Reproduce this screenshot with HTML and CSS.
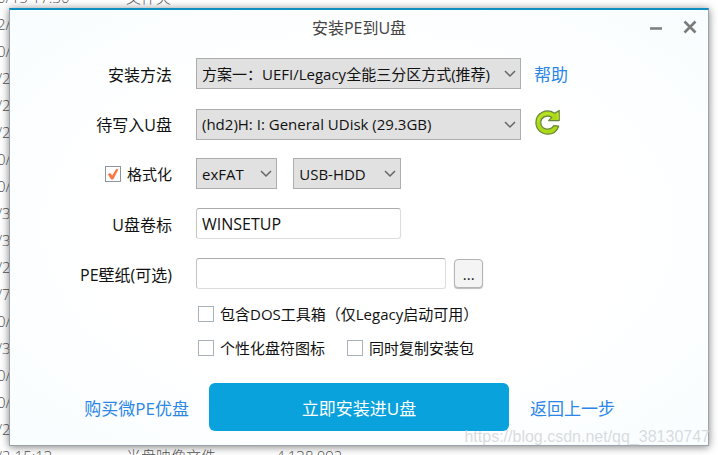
FILE: index.html
```html
<!doctype html>
<html lang="zh-CN">
<head>
    <meta charset="UTF-8">
    <meta name="viewport" content="width=device-width, initial-scale=1.0">
    <title>安装PE到U盘</title>
    <link rel="stylesheet" href="styles.css">
</head>
<body>
<div class="files">
    <div class="file"><span class="date">0/15 17:30</span><span class="type">文件夹</span></div>
    <div class="file">2/</div>
    <div class="file">0/</div>
    <div class="file">/2</div>
    <div class="file">/2</div>
    <div class="file">/2</div>
    <div class="file">0/</div>
    <div class="file">0/</div>
    <div class="file">/3</div>
    <div class="file">/3</div>
    <div class="file">/2</div>
    <div class="file">/7</div>
    <div class="file">0/</div>
    <div class="file">/3</div>
    <div class="file">0/</div>
    <div class="file">0/</div>
    <div class="file">/2</div>
    <div class="file"><span class="date">/2 15:13</span><span class="type">光盘映像文件</span><span>4,138,092</span></div>
</div>
<div class="dialog">
    <div class="titlebar">
        <h1 class="title">安装PE到U盘</h1>
        <div class="windowButtons">
            <button class="windowButton" type="button" aria-label="最小化">
                <svg width="14" height="14" viewBox="0 0 14 14"><path d="M1 8.5H13" stroke="#808080" stroke-width="2.6"/></svg>
            </button>
            <button class="windowButton" type="button" aria-label="关闭">
                <svg width="14" height="14" viewBox="0 0 14 14"><path d="M1.5 1.5L12.5 12.5M12.5 1.5L1.5 12.5" stroke="#7b7b7b" stroke-width="2.6"/></svg>
            </button>
        </div>
    </div>
    <form class="form">
        <div class="row">
            <label class="label" for="method">安装方法</label>
            <div class="select">
                <select id="method">
                    <option>方案一：UEFI/Legacy全能三分区方式(推荐)</option>
                </select>
                <svg class="arrow" width="12" height="8" viewBox="0 0 12 8"><path d="M1 1L6 6L11 1"/></svg>
            </div>
            <div class="extra"><a class="link" href="#">帮助</a></div>
        </div>
        <div class="row">
            <label class="label" for="disk">待写入U盘</label>
            <div class="select">
                <select id="disk">
                    <option>(hd2)H: I: General UDisk (29.3GB)</option>
                </select>
                <svg class="arrow" width="12" height="8" viewBox="0 0 12 8"><path d="M1 1L6 6L11 1"/></svg>
            </div>
            <div class="extra">
                <button class="refresh" type="button" aria-label="刷新">
                    <svg width="28" height="28" viewBox="0 0 28 28">
                        <path d="M20.6 5.2L25.2 2.4V12.6H14.6L17.8 9.4C12.8 6.4 6.8 9.2 6.8 14.6C6.8 21.4 15.6 23.6 19.8 17.6L24.7 18.2C22.7 23.8 18.5 26.2 13.8 26.2C7 26.2 1.9 21.3 1.9 14.5C1.9 4.6 12.6 0 20.6 5.2Z" fill="#acd916" stroke="#6a8440" stroke-width="1.2" stroke-linejoin="round"/>
                        <path d="M23.8 5.2V11.2M4 14C4.4 6.4 12.5 3.2 19 7.2" fill="none" stroke="#bfe62c" stroke-width="1.3"/>
                    </svg>
                </button>
            </div>
        </div>
        <div class="row">
            <label class="label small check checkRight">
                <span class="box">
                    <input type="checkbox" checked>
                    <svg class="tick" width="16" height="16" viewBox="0 0 16 16"><path d="M2.8 8.2L5.2 7.1L7.2 9.4L11.4 2.8L13.4 3.4L8.2 13.4L6.2 13.4Z"/></svg>
                </span>
                格式化
            </label>
            <div class="fields spread">
                <div class="select">
                    <select aria-label="文件系统">
                        <option>exFAT</option>
                    </select>
                    <svg class="arrow" width="12" height="8" viewBox="0 0 12 8"><path d="M1 1L6 6L11 1"/></svg>
                </div>
                <div class="select wide">
                    <select aria-label="启动模式">
                        <option>USB-HDD</option>
                    </select>
                    <svg class="arrow" width="12" height="8" viewBox="0 0 12 8"><path d="M1 1L6 6L11 1"/></svg>
                </div>
            </div>
        </div>
        <div class="row">
            <label class="label" for="volume">U盘卷标</label>
            <div class="fields"><input class="text volume" id="volume" type="text" value="WINSETUP"></div>
        </div>
        <div class="row">
            <label class="label" for="wallpaper">PE壁纸(可选)</label>
            <div class="fields">
                <input class="text wallpaper" id="wallpaper" type="text">
                <button class="browse" type="button" aria-label="浏览">...</button>
            </div>
        </div>
        <div class="options">
            <label class="check"><input type="checkbox">包含DOS工具箱（仅Legacy启动可用）</label>
            <div class="optionLine">
                <label class="check"><input type="checkbox">个性化盘符图标</label>
                <label class="check"><input type="checkbox">同时复制安装包</label>
            </div>
        </div>
        <div class="footer">
            <a class="link footerLeft" href="#">购买微PE优盘</a>
            <button class="install" type="button">立即安装进U盘</button>
            <a class="link footerRight" href="#">返回上一步</a>
        </div>
    </form>
</div>
<div class="watermark">https://blog.csdn.net/qq_38130747</div>
</body>
</html>
```
FILE: styles.css
```css
* {
    box-sizing: border-box;
}

body {
    margin: 0;
    height: 100vh;
    overflow: hidden;
    position: relative;
    background: #fff;
    color: #111;
    font-family: "Open Sans", "Noto Sans CJK SC", sans-serif;
    font-size: 15px;
}

button,
input,
select {
    font: inherit;
    color: inherit;
    margin: 0;
}

svg {
    display: block;
}

.files {
    margin: -16px 0 0 -3px;
    color: #555;
    font-weight: 300;
}

.file {
    display: flex;
    height: 27px;
    line-height: 27px;
    white-space: nowrap;
}

.date {
    width: 129px;
}

.type {
    width: 150px;
}

.dialog {
    position: absolute;
    inset: 8px 9px 9px;
    border: 1px solid #9aa3ab;
    border-top: 2px solid #0f8fc0;
    background: radial-gradient(ellipse at center, #fff 55%, #f8fdff 100%);
    box-shadow: 0 1px 8px rgba(0, 0, 0, 0.5);
}

.titlebar {
    display: grid;
    grid-template-columns: 1fr auto 1fr;
    align-items: center;
    height: 34px;
    padding: 0 11px;
}

.title {
    grid-column: 2;
    margin: 0;
    font-size: 16px;
    font-weight: normal;
    color: #444;
}

.windowButtons {
    display: flex;
    justify-content: flex-end;
    gap: 20px;
}

.windowButton,
.refresh {
    padding: 0;
    border: 0;
    background: none;
    cursor: pointer;
}

.form {
    padding-top: 14px;
}

.row {
    display: grid;
    grid-template-columns: 186fr 325fr 187fr;
    align-items: center;
    height: 31px;
    margin-bottom: 19px;
}

.label {
    padding-right: 24px;
    text-align: right;
    font-size: 16px;
}

.small {
    font-size: 15px;
}

.select {
    position: relative;
}

.select select {
    appearance: none;
    display: block;
    width: 100%;
    height: 31px;
    padding: 0 24px 0 5px;
    border: 1px solid #adadad;
    border-radius: 0;
    background: #e1e1e1;
}

.arrow {
    position: absolute;
    top: 12px;
    right: 5px;
    fill: none;
    stroke: #666;
    stroke-width: 1.5;
    pointer-events: none;
}

.extra {
    padding-left: 13px;
}

.link {
    color: #2b86e8;
    font-size: 17px;
    text-decoration: none;
}

.fields {
    display: flex;
    align-items: center;
    gap: 8px;
}

.spread {
    gap: 16px;
}

.spread .select {
    width: 25%;
}

.spread .wide {
    width: 33%;
}

.check {
    display: flex;
    align-items: center;
    gap: 6px;
}

.checkRight {
    justify-content: flex-end;
}

.check input {
    appearance: none;
    display: block;
    width: 16px;
    height: 16px;
    border: 1px solid #a9b1bb;
    background: #fff;
}

.box {
    position: relative;
}

.box input {
    border-color: #8c96a0;
}

.tick {
    position: absolute;
    inset: 0;
    fill: #ff7443;
    pointer-events: none;
}

.text {
    height: 31px;
    padding: 0 5px;
    border: 1px solid #ddd;
    border-top-color: #aaa;
    border-left-color: #c4c4c4;
    border-radius: 3px;
    background: #fff;
    font-size: 16px;
}

.volume {
    width: 63%;
}

.wallpaper {
    width: 77%;
}

.browse {
    width: 29px;
    height: 29px;
    padding: 0;
    border: 1px solid #b4b4b4;
    border-radius: 4px;
    background: #f4f4f4;
    box-shadow: 0 1px 1px #bbb;
}

.options {
    display: flex;
    flex-direction: column;
    gap: 12px;
    margin-top: -5px;
    padding-left: 188px;
}

.options .check {
    line-height: 22px;
}

.optionLine {
    display: flex;
    gap: 22px;
}

.footer {
    display: grid;
    grid-template-columns: 199fr 300fr 199fr;
    align-items: center;
    margin-top: 24px;
}

.footerLeft {
    padding-right: 20px;
    text-align: right;
}

.footerRight {
    padding-left: 21px;
}

.install {
    height: 48px;
    border: 0;
    border-radius: 6px;
    background: #0aa2dc;
    color: #fff;
    font-size: 17px;
    cursor: pointer;
}

.watermark {
    position: absolute;
    right: 8px;
    bottom: 8px;
    color: rgba(205, 208, 210, 0.75);
    font: 16px/20px "Liberation Sans", Arial, sans-serif;
    pointer-events: none;
}
```
